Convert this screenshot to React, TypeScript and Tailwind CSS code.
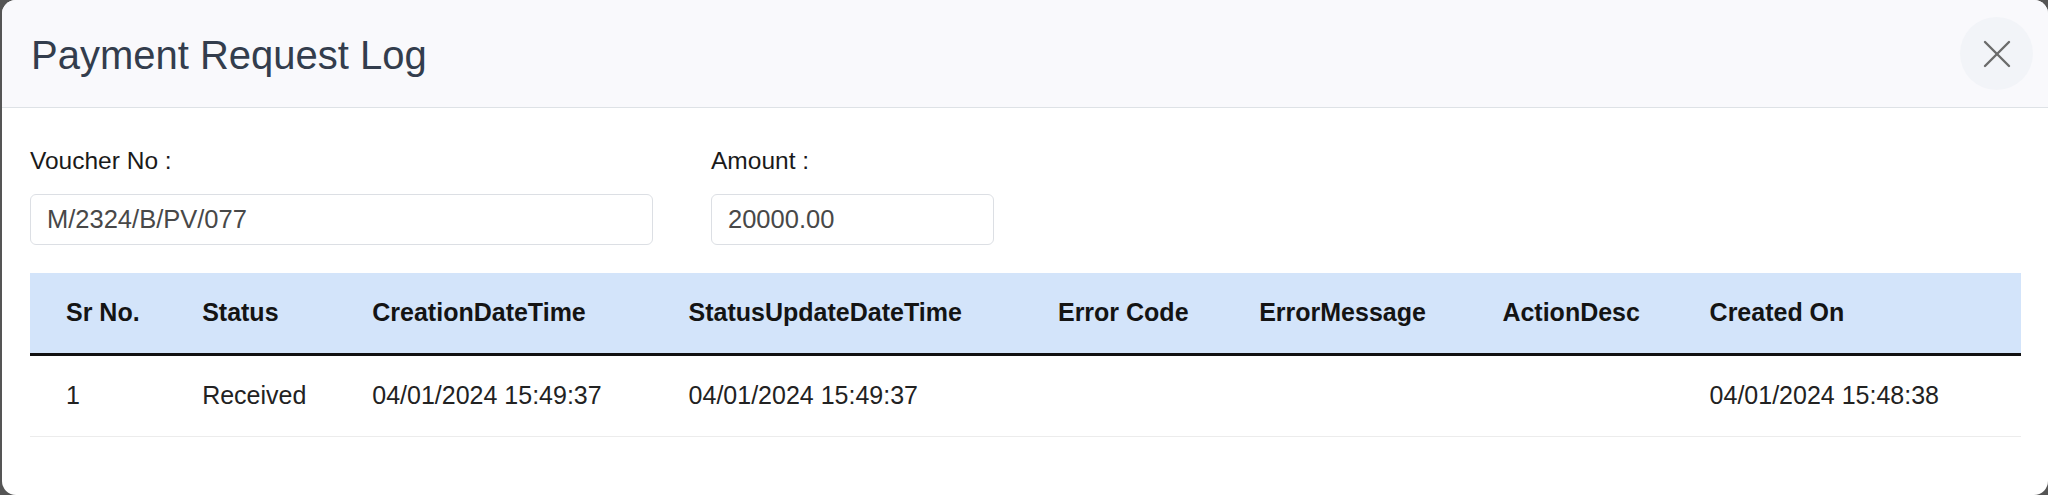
import React from 'react';

const columns = [
  { key: 'sr', label: 'Sr No.', width: 136 },
  { key: 'status', label: 'Status', width: 170 },
  { key: 'created', label: 'CreationDateTime', width: 316 },
  { key: 'updated', label: 'StatusUpdateDateTime', width: 369 },
  { key: 'code', label: 'Error Code', width: 201 },
  { key: 'message', label: 'ErrorMessage', width: 243 },
  { key: 'action', label: 'ActionDesc', width: 207 },
  { key: 'createdOn', label: 'Created On', width: 347 },
];

const rows = [
  {
    sr: '1',
    status: 'Received',
    created: '04/01/2024 15:49:37',
    updated: '04/01/2024 15:49:37',
    code: '',
    message: '',
    action: '',
    createdOn: '04/01/2024 15:48:38',
  },
];

export default function App() {
  return (
    <div className="w-[2048px] h-[495px] overflow-hidden bg-[#555555] font-['Liberation_Sans',Arial,sans-serif]">
      <div className="ml-[2px] h-full rounded-[14px] bg-white overflow-hidden">
        {/* header */}
        <div className="h-[108px] flex items-center justify-between pl-[29px] pr-[15px] bg-[#f9f9fc] border-b border-[#dee2e6]">
          <h2 className="text-[40px] leading-none pt-[3px] text-[#333d4d]">Payment Request Log</h2>
          <button className="w-[73px] h-[73px] rounded-full bg-[#f2f4f8] flex items-center justify-center">
            <svg width="28" height="28" viewBox="0 0 28 28" fill="none" stroke="#6b6b6b" strokeWidth="2.4" strokeLinecap="round">
              <line x1="2" y1="2" x2="26" y2="26" />
              <line x1="26" y1="2" x2="2" y2="26" />
            </svg>
          </button>
        </div>

        {/* body */}
        <div className="pl-[28px] pr-[27px] pt-[39px]">
          <div className="flex gap-[58px]">
            <div className="w-[623px]">
              <label className="block text-[24.5px] leading-[28px] text-[#1a1a1a]">Voucher No :</label>
              <input
                readOnly
                value="M/2324/B/PV/077"
                className="mt-[19px] w-full h-[51px] px-[16px] rounded-[6px] border border-[#dcdfe4] bg-white text-[25.5px] text-[#484848] font-['Liberation_Sans',Arial,sans-serif] outline-none"
              />
            </div>
            <div className="w-[283px]">
              <label className="block text-[24.5px] leading-[28px] text-[#1a1a1a]">Amount :</label>
              <input
                readOnly
                value="20000.00"
                className="mt-[19px] w-full h-[51px] px-[16px] rounded-[6px] border border-[#dcdfe4] bg-white text-[25.5px] text-[#484848] font-['Liberation_Sans',Arial,sans-serif] outline-none"
              />
            </div>
          </div>

          <table className="mt-[28px] w-full table-fixed border-collapse">
            <colgroup>
              {columns.map((c) => (
                <col key={c.key} style={{ width: c.width }} />
              ))}
            </colgroup>
            <thead>
              <tr className="bg-[#d3e4fa] border-b-[3px] border-[#111111]">
                {columns.map((c) => (
                  <th key={c.key} className="h-[81px] pl-[36px] text-left align-middle text-[25px] font-bold text-[#141414] whitespace-nowrap">
                    {c.label}
                  </th>
                ))}
              </tr>
            </thead>
            <tbody>
              {rows.map((r, i) => (
                <tr key={i} className="border-b border-[#ececec]">
                  {columns.map((c) => (
                    <td key={c.key} className="h-[82px] pl-[36px] align-middle text-[25px] text-[#222222] whitespace-nowrap">
                      {r[c.key as keyof typeof r]}
                    </td>
                  ))}
                </tr>
              ))}
            </tbody>
          </table>
        </div>
      </div>
    </div>
  );
}
